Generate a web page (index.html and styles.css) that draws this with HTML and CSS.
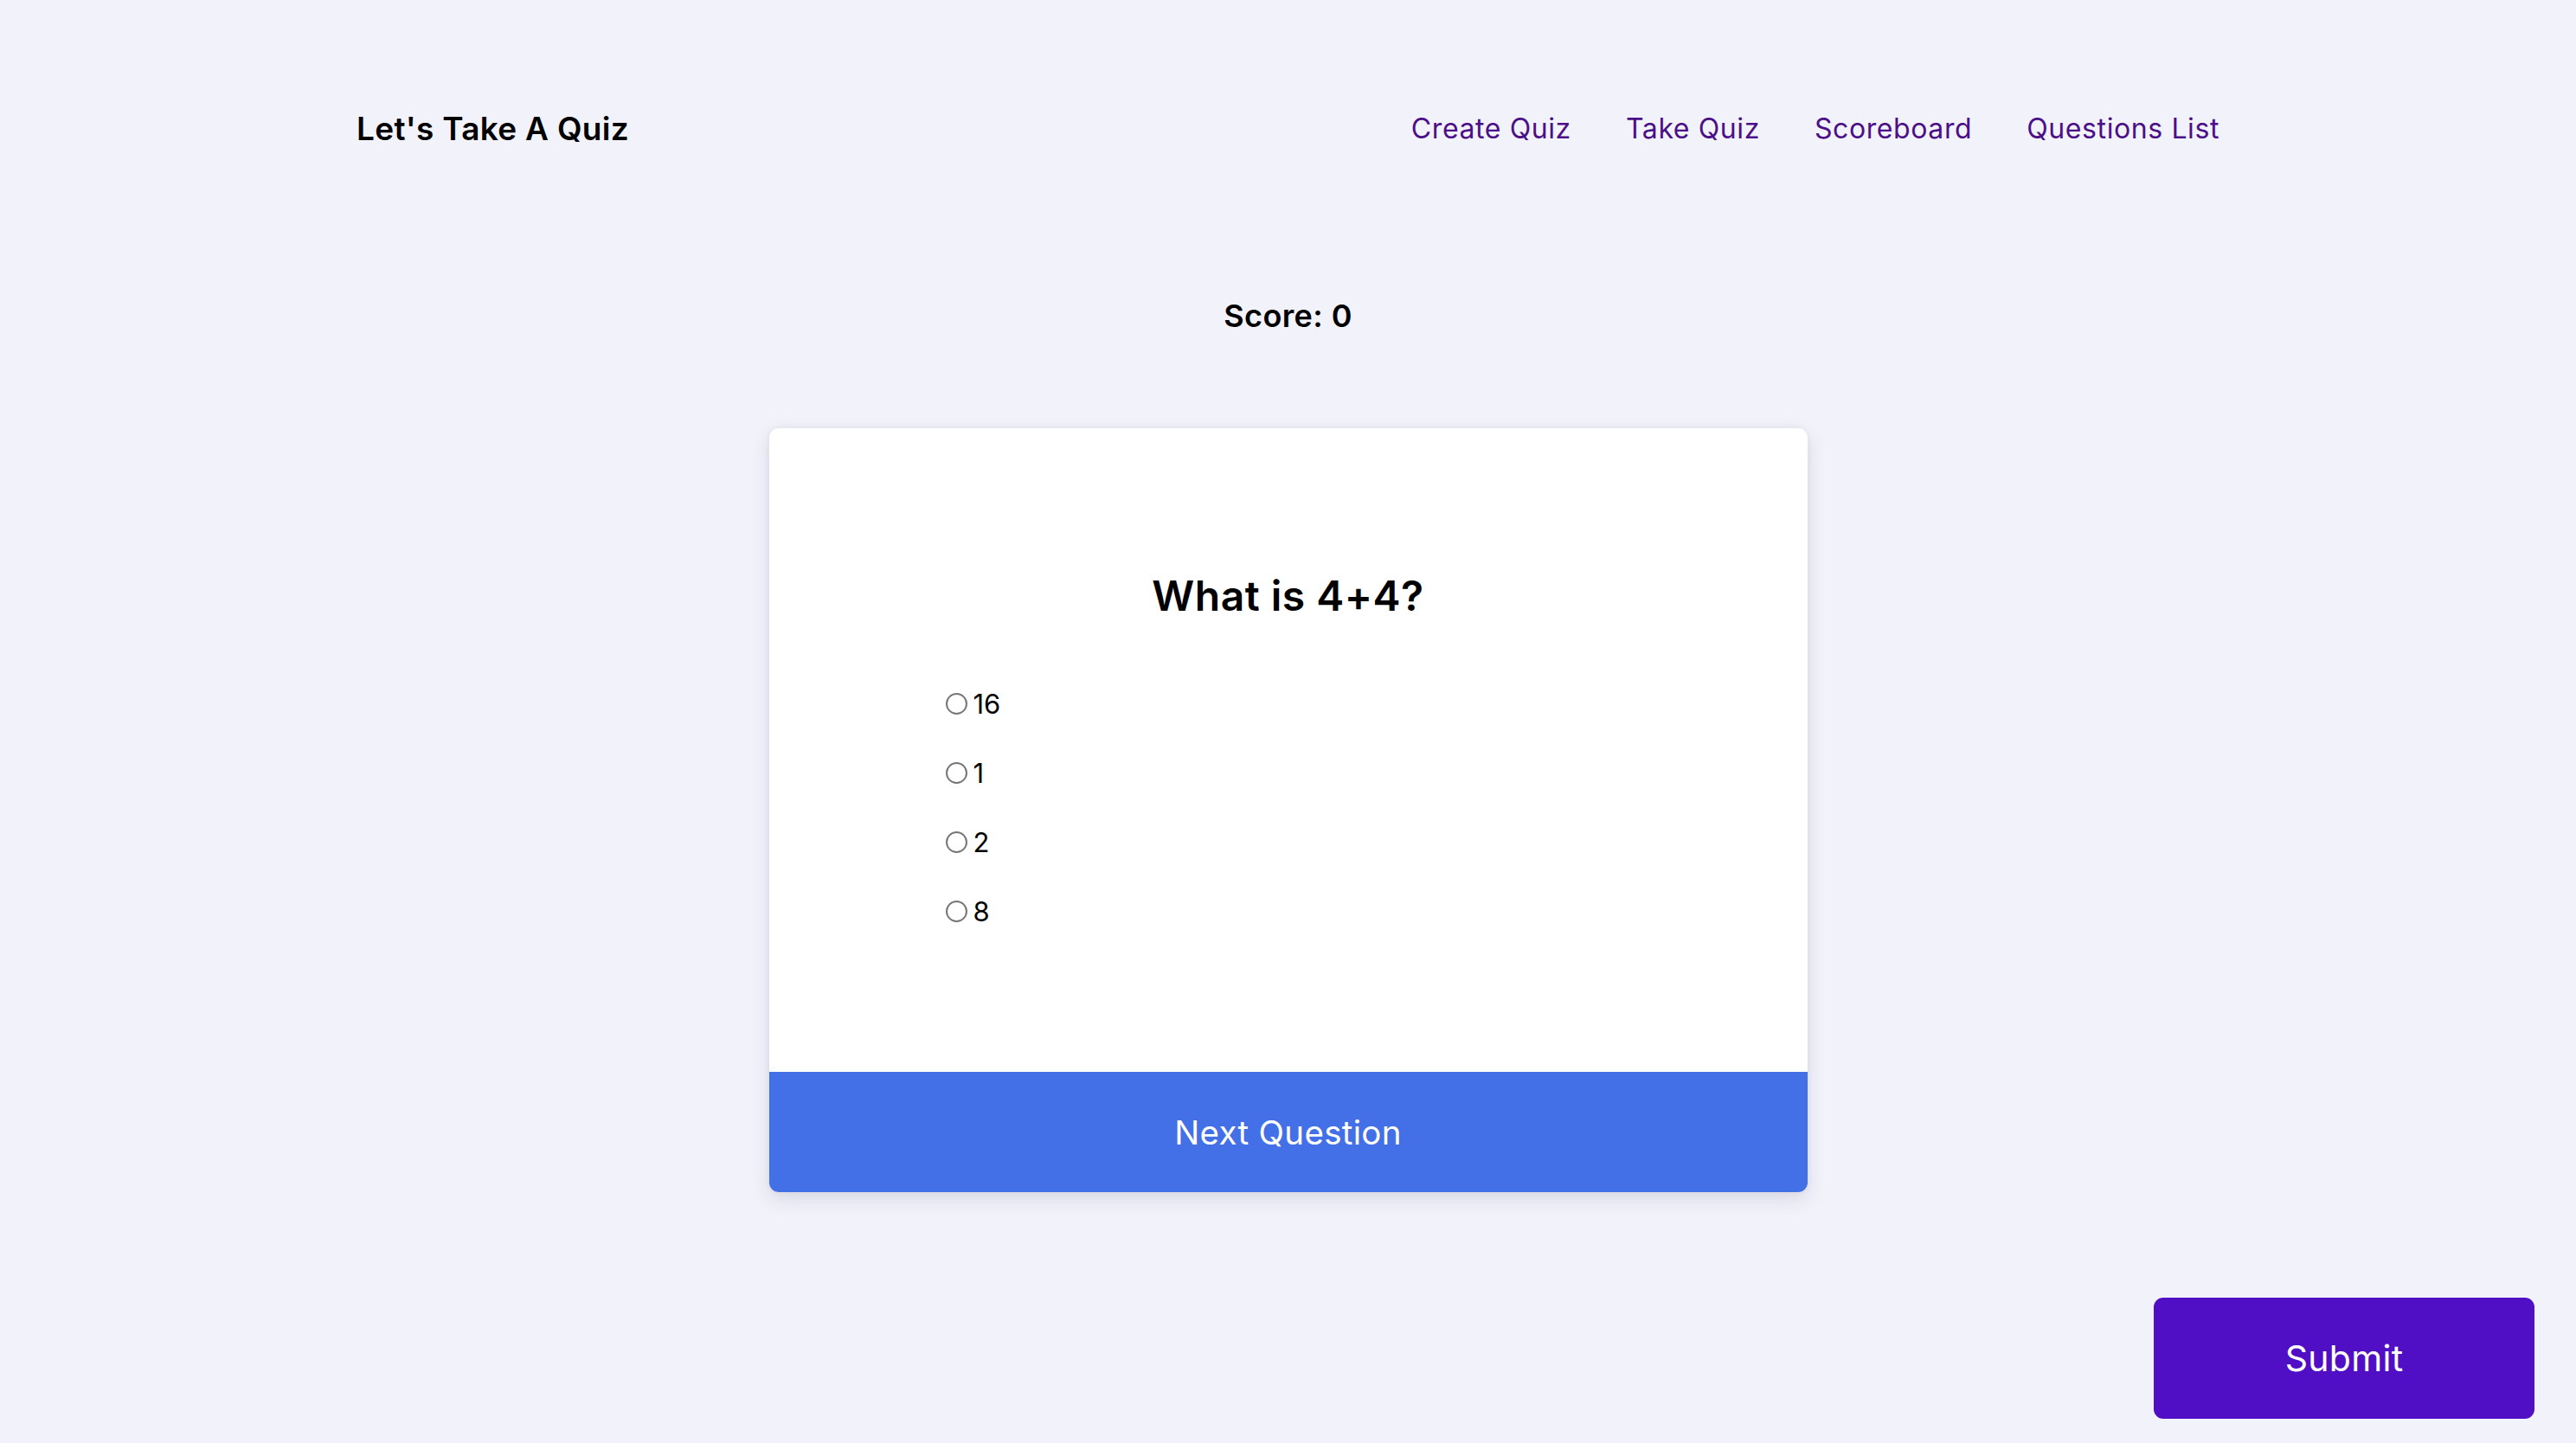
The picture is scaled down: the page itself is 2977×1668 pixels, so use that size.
FILE: index.html
```html
<!DOCTYPE html>
<html lang="en">
<head>
<meta charset="utf-8">
<title>Let's Take A Quiz</title>
<link rel="stylesheet" href="styles.css">
</head>
<body>
<div class="page">
  <header class="header">
    <div class="logo">Let's Take A Quiz</div>
    <nav class="nav">
      <a class="nav-link" href="#">Create Quiz</a>
      <a class="nav-link" href="#">Take Quiz</a>
      <a class="nav-link" href="#">Scoreboard</a>
      <a class="nav-link" href="#">Questions List</a>
    </nav>
  </header>

  <h2 class="score">Score: 0</h2>

  <section class="card">
    <div class="card-body">
      <h3 class="question">What is 4+4?</h3>
      <div class="options">
        <label class="option"><input class="radio" type="radio" name="answer" value="16">16</label>
        <label class="option"><input class="radio" type="radio" name="answer" value="1">1</label>
        <label class="option"><input class="radio" type="radio" name="answer" value="2">2</label>
        <label class="option"><input class="radio" type="radio" name="answer" value="8">8</label>
      </div>
    </div>
    <button class="next-btn" type="button">Next Question</button>
  </section>

  <div class="submit-row">
    <button class="submit-btn" type="button">Submit</button>
  </div>
</div>
</body>
</html>
```

FILE: styles.css
```css
* {
  box-sizing: border-box;
}

html, body {
  margin: 0;
  padding: 0;
}

body {
  background: #f2f2fb;
  font-family: "Inter", "Noto Sans", sans-serif;
  color: #000;
}

.page {
  padding-top: 103px;
}

.header {
  width: 2153px;
  height: 90px;
  margin: 0 auto;
  display: flex;
  align-items: center;
  justify-content: space-between;
}

.logo {
  font-size: 37px;
  font-weight: 600;
  letter-spacing: 0.3px;
}

.nav {
  display: flex;
  align-items: center;
  gap: 63px;
}

.nav-link {
  font-size: 32px;
  font-weight: 400;
  letter-spacing: 0.6px;
  color: #4b1088;
  text-decoration: none;
}

.score {
  margin: 147px 0 0;
  height: 50px;
  line-height: 50px;
  text-align: center;
  font-size: 36px;
  font-weight: 600;
  letter-spacing: 0.4px;
}

.card {
  width: 1200px;
  margin: 105px auto 0;
  background: #fff;
  border-radius: 11px;
  overflow: hidden;
  box-shadow: 0 8px 22px rgba(40, 40, 70, 0.12), 0 0 6px rgba(40, 40, 70, 0.06);
}

.card-body {
  padding: 164px 0 166px 204px;
}

.question {
  margin: 0 0 74px -204px;
  height: 60px;
  line-height: 60px;
  text-align: center;
  font-size: 48px;
  font-weight: 600;
  letter-spacing: 0.5px;
}

.options {
  display: flex;
  flex-direction: column;
  gap: 40px;
}

.option {
  display: flex;
  align-items: center;
  height: 40px;
  font-size: 31px;
  gap: 7px;
}

.radio {
  appearance: none;
  -webkit-appearance: none;
  width: 25px;
  height: 25px;
  margin: 0;
  border: 2px solid #777;
  border-radius: 50%;
  background: #fff;
}

.next-btn {
  display: block;
  width: 100%;
  height: 139px;
  border: 0;
  margin: 0;
  background: #4370e6;
  color: #fff;
  font-family: inherit;
  font-size: 38.5px;
  font-weight: 400;
  letter-spacing: 0.3px;
}

.submit-row {
  display: flex;
  justify-content: flex-end;
  margin-top: 122px;
  padding-right: 48px;
}

.submit-btn {
  width: 440px;
  height: 140px;
  border: 0;
  border-radius: 11px;
  background: #500fc5;
  color: #fff;
  font-family: inherit;
  font-size: 41px;
  font-weight: 400;
  letter-spacing: 0.3px;
}
```
